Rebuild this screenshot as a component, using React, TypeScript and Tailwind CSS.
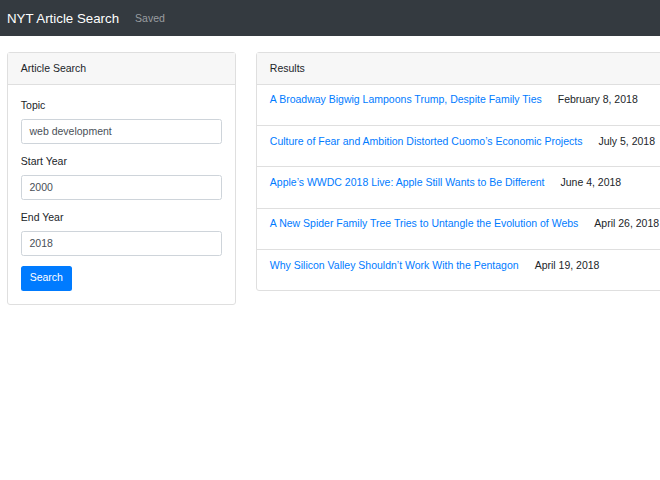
import React from "react";

const results = [
  { title: "A Broadway Bigwig Lampoons Trump, Despite Family Ties", date: "February 8, 2018" },
  { title: "Culture of Fear and Ambition Distorted Cuomo’s Economic Projects", date: "July 5, 2018" },
  { title: "Apple’s WWDC 2018 Live: Apple Still Wants to Be Different", date: "June 4, 2018" },
  { title: "A New Spider Family Tree Tries to Untangle the Evolution of Webs", date: "April 26, 2018" },
  { title: "Why Silicon Valley Shouldn’t Work With the Pentagon", date: "April 19, 2018" },
];

function Field({ label, value }: { label: string; value: string }) {
  return (
    <div className="mb-[10.25px]">
      <div className="leading-[15.75px] mb-[5.5px]">{label}</div>
      <div className="h-[24.5px] border border-[#ced4da] rounded-[2.5px] px-[7.68px] flex items-center text-[#495057]">
        {value}
      </div>
    </div>
  );
}

export default function App() {
  return (
    <div
      className="w-[660px] min-h-[480px] overflow-hidden bg-white text-[#212529] text-[10.5px]"
      style={{ fontFamily: '"Liberation Sans", Arial, sans-serif' }}
    >
      <nav className="h-[36px] bg-[#343a40] flex items-center pl-[7px] pt-[1px]">
        <span className="text-white text-[13.3px] leading-none">NYT Article Search</span>
        <span className="ml-[16px] text-[#9a9da0] leading-none">Saved</span>
      </nav>
      <div className="flex items-start pt-[16px] pl-[7px] gap-[20px]">
        <div className="w-[229px] shrink-0 border border-[#dfdfdf] rounded-[3px]">
          <div className="bg-[#f7f7f7] border-b border-[#dfdfdf] px-[12.8px] py-[7.5px] leading-[15.5px]">
            Article Search
          </div>
          <div className="px-[12.8px] pt-[13.6px] pb-[13.5px]">
            <Field label="Topic" value="web development" />
            <Field label="Start Year" value="2000" />
            <Field label="End Year" value="2018" />
            <div className="h-[24.5px] w-[51px] bg-[#007bff] rounded-[2.5px] text-white flex items-center justify-center mt-[2.5px]">
              Search
            </div>
          </div>
        </div>
        <div className="w-[478px] shrink-0 border border-[#dfdfdf] rounded-[3px]">
          <div className="bg-[#f7f7f7] border-b border-[#dfdfdf] px-[12.8px] py-[7.5px] leading-[15.5px]">
            Results
          </div>
          <ul>
            {results.map((r, i) => (
              <li
                key={i}
                className={`px-[12.8px] pt-[7.8px] pb-[16.8px] leading-[15.75px] whitespace-nowrap ${
                  i < results.length - 1 ? "border-b border-[#dfdfdf]" : ""
                }`}
              >
                <span className="text-[#007bff]">{r.title}</span>
                <span className="ml-[16px]">{r.date}</span>
              </li>
            ))}
          </ul>
        </div>
      </div>
    </div>
  );
}
